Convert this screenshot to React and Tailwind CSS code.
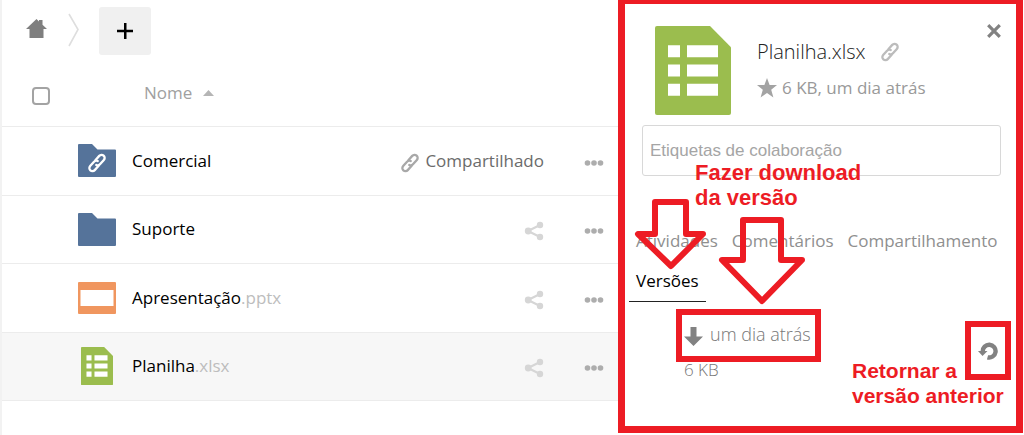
import { useState } from 'react'
import clsx from 'clsx'

const files = [
  { id: 1, name: 'Comercial', ext: '', type: 'shared', shared: true },
  { id: 2, name: 'Suporte', ext: '', type: 'folder' },
  { id: 3, name: 'Apresentação', ext: '.pptx', type: 'slides' },
  { id: 4, name: 'Planilha', ext: '.xlsx', type: 'sheet' },
]

const tabs = ['Atividades', 'Comentários', 'Compartilhamento', 'Versões']

function LinkIcon({ className }) {
  return (
    <svg viewBox="0 0 20 20" className={className} fill="none" stroke="currentColor" strokeWidth="2.3" strokeLinecap="round" aria-hidden="true">
      <g transform="translate(10 10) rotate(-48)">
        <path d="M1 -3.1H6.800a3.100 3.100 0 0 1 0 6.200H1a3.100 3.100 0 0 1 -3 -2.300" />
        <path d="M-1 3.100H-6.800a3.100 3.100 0 0 1 0 -6.200H-1a3.100 3.100 0 0 1 3 2.300" />
      </g>
    </svg>
  )
}

function FolderIcon({ shared }) {
  return (
    <span className="relative block text-white">
      <svg viewBox="0 0 38 33" className="w-[38px] h-[33px]" aria-hidden="true">
        <path d="M1 0H14L19.5 5.5H37a1 1 0 0 1 1 1V32a1 1 0 0 1-1 1H1a1 1 0 0 1-1-1V1a1 1 0 0 1 1-1z" fill="#55739a" />
      </svg>
      {shared && <LinkIcon className="absolute left-[9px] top-[9px] size-5" />}
    </span>
  )
}

function SlidesIcon() {
  return (
    <svg viewBox="0 0 38 32" className="w-[38px] h-8" aria-hidden="true">
      <rect width="38" height="32" rx="1" fill="#f0965f" />
      <rect x="2.5" y="8" width="33" height="16" fill="#fff" />
    </svg>
  )
}

function SheetIcon({ className }) {
  return (
    <svg viewBox="0 0 76 88" preserveAspectRatio="none" className={className} aria-hidden="true">
      <path d="M2 0H55L76 21V86a2 2 0 0 1-2 2H2a2 2 0 0 1-2-2V2a2 2 0 0 1 2-2z" fill="#9bbd4e" />
      <path d="M13 19h12v12H13zM32 19h31v12H32zM13 38h12v12H13zM32 38h31v12H32zM13 57h12v12H13zM32 57h31v12H32z" fill="#fff" />
    </svg>
  )
}

function FileIcon({ type }) {
  if (type === 'slides') return <SlidesIcon />
  if (type === 'sheet') return <SheetIcon className="w-8 h-[38px] mx-[3px]" />
  return <FolderIcon shared={type === 'shared'} />
}

function ShareIcon() {
  return (
    <svg viewBox="0 0 20 20" className="size-5" fill="#d6d6d6" aria-hidden="true">
      <path d="M16 4L4 10L16 16" fill="none" stroke="#d6d6d6" strokeWidth="2.2" />
      <circle cx="4.2" cy="10" r="3.4" />
      <circle cx="16" cy="4" r="3.2" />
      <circle cx="16" cy="16" r="3.2" />
    </svg>
  )
}

function DotsIcon() {
  return (
    <svg viewBox="0 0 20 6" className="w-5 h-[6px]" fill="#adadad" aria-hidden="true">
      <circle cx="3.5" cy="3" r="2.8" />
      <circle cx="10" cy="3" r="2.8" />
      <circle cx="16.5" cy="3" r="2.8" />
    </svg>
  )
}

function TopBar() {
  return (
    <nav className="flex items-start pt-[7px] pl-6">
      <a href="#home" aria-label="Início" className="mt-3">
        <svg viewBox="0 0 21 19" className="w-[21px] h-[19px]" fill="#7f7f7f" aria-hidden="true">
          <path d="M10.5 0L0 10H3.5V19H17.5V10H21L16.5 5.7V1H13V2.4z" />
        </svg>
      </a>
      <svg viewBox="0 0 11 34" className="w-[11px] h-[34px] mt-[6px] ml-[21px]" fill="none" stroke="#dedede" strokeWidth="1.6" aria-hidden="true">
        <path d="M1 1L10 16.5L1 33" />
      </svg>
      <button aria-label="Novo" className="ml-5 flex h-12 w-[52px] items-center justify-center rounded-[3px] bg-[#f0f0f0]">
        <svg viewBox="0 0 16 16" className="size-4" aria-hidden="true">
          <path d="M7 0h2.5v6.8H16v2.4H9.5V16H7V9.200H0V6.800H7z" fill="#000" />
        </svg>
      </button>
    </nav>
  )
}

function FileTable({ selectedId, onSelect }) {
  return (
    <table className="w-full table-fixed border-collapse text-[17px] leading-6">
      <thead>
        <tr className="h-[71px] border-b border-[#ececec]">
          <th className="w-[76px] pt-3 pl-[30px] text-left">
            <input
              type="checkbox"
              aria-label="Selecionar todos"
              className="block size-[18px] appearance-none rounded-[4px] border-2 border-[#a3a3a3] bg-white"
            />
          </th>
          <th className="pt-[6px] pl-[66px] text-left font-normal text-[#a0a0a0]">
            <button className="flex items-center gap-[11px]">
              Nome
              <svg viewBox="0 0 11 6" className="w-[11px] h-[6px]" fill="#b5b5b5" aria-hidden="true">
                <path d="M5.5 0L11 6H0z" />
              </svg>
            </button>
          </th>
          <th className="w-[168px]" />
          <th className="w-[74px]" />
        </tr>
      </thead>
      <tbody>
        {files.map(f => (
          <tr
            key={f.id}
            onClick={() => onSelect(f.id)}
            className={clsx('border-b border-[#ececec] odd:h-[69px] even:h-[68px]', f.id === selectedId && 'bg-[#f7f7f7]')}
          >
            <td />
            <td>
              <a href="#file" className="flex items-center gap-4 text-black">
                <FileIcon type={f.type} />
                <span>{f.name}<span className="text-[#bdbdbd]">{f.ext}</span></span>
              </a>
            </td>
            <td>
              {f.shared ? (
                <button className="ml-auto flex items-center gap-[5px] text-[#6b6b6b]">
                  <LinkIcon className="size-5 mt-1 text-[#a8a8a8]" />
                  Compartilhado
                </button>
              ) : (
                <button aria-label="Compartilhar" className="ml-auto block pt-1"><ShareIcon /></button>
              )}
            </td>
            <td>
              <button aria-label="Ações" className="ml-10 block pt-1"><DotsIcon /></button>
            </td>
          </tr>
        ))}
      </tbody>
    </table>
  )
}

function Details() {
  return (
    <header className="flex pt-5 pl-[30px] pr-[15px]">
      <SheetIcon className="mt-[2px] w-[76px] h-[89px]" />
      <div className="ml-[26px] flex-1 pt-[14px]">
        <h2 className="flex items-center gap-[14px] text-xl leading-7 font-light text-[#222]">
          Planilha.xlsx
          <a href="#link" aria-label="Link"><LinkIcon className="size-5 text-[#bcbcbc]" /></a>
        </h2>
        <p className="mt-2 flex items-center gap-[5px] text-[17px] leading-7 text-[#999]">
          <svg viewBox="0 0 20 20" className="size-5" fill="#a3a3a3" aria-hidden="true">
            <path d="M10 0L12.6 7H20L14.2 11.7L16.4 19.5L10 15L3.6 19.5L5.8 11.7L0 7H7.4z" />
          </svg>
          6 KB, um dia atrás
        </p>
      </div>
      <button aria-label="Fechar" className="self-start">
        <svg viewBox="0 0 14 14" className="size-[14px]" stroke="#828282" strokeWidth="3.2" aria-hidden="true">
          <path d="M1.2 1.2L12.8 12.8M12.8 1.2L1.2 12.8" />
        </svg>
      </button>
    </header>
  )
}

function VersionList() {
  return (
    <ul className="pt-5 text-lg leading-6 font-light text-[#777]">
      <li className="flex items-start pl-[59px] pr-[18px]">
        <div className="flex-1">
          <a href="#download" className="flex items-center gap-[7px]">
            <svg viewBox="0 0 19 19" className="size-[19px] mt-1" fill="#828282" aria-hidden="true">
              <path d="M6.5 0h6v9.500H19L9.500 19L0 9.500h6.500z" />
            </svg>
            um dia atrás
          </a>
          <p className="mt-3 text-[17px]">6 KB</p>
        </div>
        <button aria-label="Restaurar" className="mt-5">
          <svg viewBox="0 0 20 18" className="w-5 h-[18px]" aria-hidden="true">
            <path d="M4.800 9.500A6.400 6.400 0 1 1 9.500 15.300" fill="none" stroke="#828282" strokeWidth="4.400" />
            <path d="M0 9H9.500L4.500 14z" fill="#828282" />
          </svg>
        </button>
      </li>
    </ul>
  )
}

// Tutorial marks drawn over the sidebar
function Annotations() {
  return (
    <div className="pointer-events-none absolute inset-0 font-['Liberation_Sans',Arial,sans-serif] leading-[25px] font-bold text-[#ed1c24]">
      <svg viewBox="0 0 391 423" className="absolute top-0 left-0 h-[423px] w-[391px]" fill="none" stroke="#ed1c24" strokeWidth="6" strokeLinejoin="round" aria-hidden="true">
        <path d="M30 198H61V230H78L46 262L13 230H30z" />
        <path d="M118 216H156V256H177L137 297L97 256H118z" />
        <path d="M54 308H193V355H54zM343 320H383V373H343z" strokeLinejoin="miter" />
      </svg>
      <p className="absolute top-[156px] left-[70px] text-[22px] leading-[25px]">Fazer download<br />da versão</p>
      <p className="absolute top-[354px] left-[227px] text-[21px] leading-[25px]">Retornar a<br />versão anterior</p>
    </div>
  )
}

export default function App() {
  const [selectedId, setSelectedId] = useState(4)
  const [tab, setTab] = useState('Versões')

  return (
    <div className="flex items-start bg-white font-['Open_Sans',sans-serif]">
      <main className="min-h-screen min-w-0 flex-1 border-l-2 border-[#f2f2f2]">
        <TopBar />
        <FileTable selectedId={selectedId} onSelect={setSelectedId} />
      </main>

      <aside className="relative mr-px w-[405px] shrink-0 border-[7px] border-t-4 border-[#ed1c24] pb-11">
        <Details />
        <div className="pt-[10px] pr-[15px] pl-[17px]">
          <input
            type="text"
            aria-label="Etiquetas de colaboração"
            placeholder="Etiquetas de colaboração"
            className="block h-[51px] w-full rounded-[3px] border border-[#d8d8d8] px-[7px] font-['Liberation_Sans',Arial,sans-serif] text-[17px] placeholder:text-[#a5a5a5]"
          />
        </div>
        <div role="tablist" className="mt-[53px] ml-1 flex flex-wrap gap-y-[7px] text-[17px] leading-6">
          {tabs.map(t => (
            <button
              key={t}
              role="tab"
              aria-selected={t === tab}
              onClick={() => setTab(t)}
              className={clsx('border-b px-[7px] pb-2', t === tab ? 'border-[#222] text-black' : 'border-transparent text-[#8f8f8f]')}
            >
              {t}
            </button>
          ))}
        </div>
        <VersionList />
        <Annotations />
      </aside>
    </div>
  )
}
